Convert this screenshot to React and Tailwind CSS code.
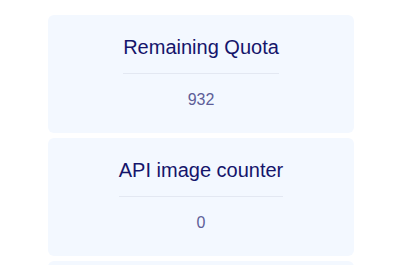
const stats = [
  { label: 'Remaining Quota', value: '932' },
  { label: 'API image counter', value: '0' },
];

function StatCard({ label, value }) {
  return (
    <div className="flex h-[118px] flex-col items-center rounded-md bg-[#f3f8ff] pt-[20px]">
      <div className="inline-block border-b border-[#e3e8f2] pb-[14px] text-[20px] leading-[24px] text-[#15156b]">
        {label}
      </div>
      <div className="mt-[16px] text-[16px] leading-[20px] text-[#5e5e98]">{value}</div>
    </div>
  );
}

export default function App() {
  return (
    <div className="h-[265px] overflow-hidden bg-white font-['Liberation_Sans',Arial,sans-serif]">
      <div className="ml-[48px] flex w-[306px] flex-col gap-[5px] pt-[15px]">
        {stats.map((s) => (
          <StatCard key={s.label} label={s.label} value={s.value} />
        ))}
        {/* next card, only its top edge is in view */}
        <div className="h-[118px] rounded-md bg-[#f3f8ff]" />
      </div>
    </div>
  );
}
